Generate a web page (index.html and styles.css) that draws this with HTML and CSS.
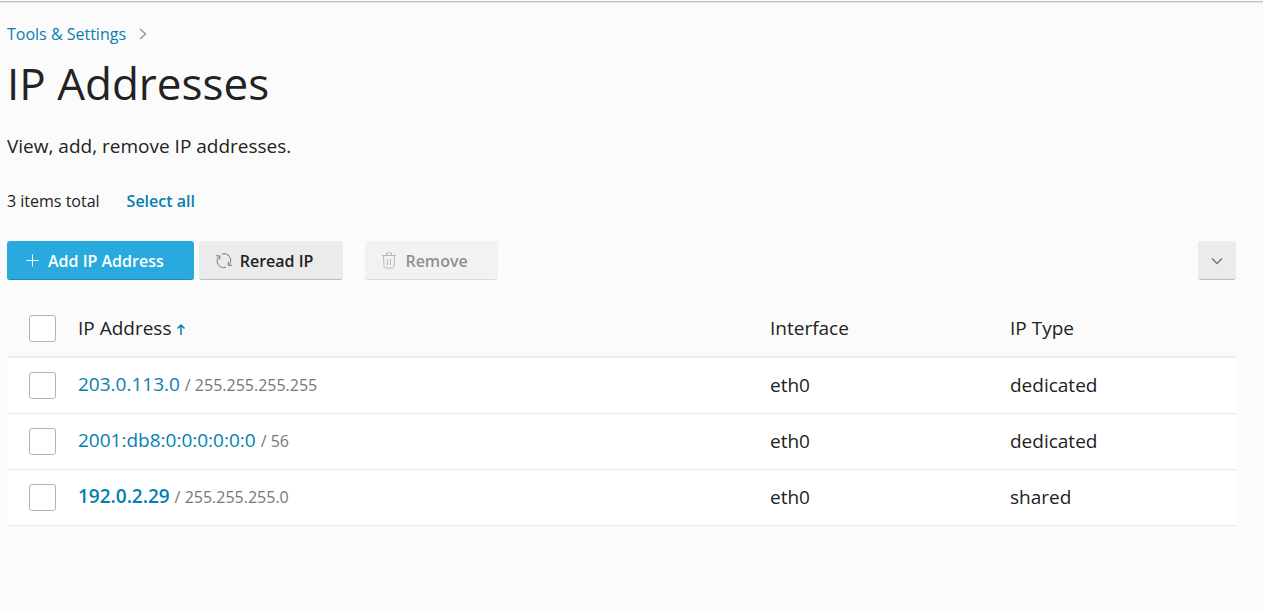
FILE: index.html
```html
<!DOCTYPE html>
<html lang="en">
<head>
<meta charset="utf-8">
<meta name="viewport" content="width=device-width, initial-scale=1">
<title>IP Addresses</title>
<link rel="stylesheet" href="styles.css">
</head>
<body>
<main class="page">
  <nav class="breadcrumb" aria-label="Breadcrumb">
    <a class="link" href="#">Tools &amp; Settings</a>
    <svg class="breadcrumb-icon" width="8" height="12" viewBox="0 0 8 12" aria-hidden="true"><path d="M1 1l5.500 5L1 11"/></svg>
  </nav>
  <h1 class="title">IP Addresses</h1>
  <p class="description">View, add, remove IP addresses.</p>
  <div class="summary">
    <span>3 items total</span>
    <a class="link strong" href="#">Select all</a>
  </div>
  <div class="toolbar">
    <button class="button primary" type="button">
      <svg class="icon" width="16" height="16" viewBox="0 0 16 16" aria-hidden="true"><path d="M8.500 1.500v12M2.500 7.500h12"/></svg>
      <span>Add IP Address</span>
    </button>
    <button class="button" type="button">
      <svg class="icon" width="18" height="18" viewBox="0 0 18 18" aria-hidden="true"><path d="M1 3.800h3.700v3.700M4.300 4.300A6.500 6.500 0 0 0 10.800 15.200M6.700 2.200A6.600 6.600 0 0 1 13.700 13M13.300 9.800v3.500H17"/></svg>
      <span>Reread IP</span>
    </button>
    <button class="button remove" type="button" disabled>
      <svg class="icon" width="16" height="18" viewBox="0 0 16 18" aria-hidden="true"><path d="M1 3.500h14M5.500 3.500v-2.500h5v2.500M2.500 3.500l.5 11q0 1.500 1.500 1.500h7q1.500 0 1.500-1.500l.5-11M6.500 7v6M9.500 7v6"/></svg>
      <span>Remove</span>
    </button>
    <button class="button toggle" type="button" aria-label="Show filters">
      <svg class="icon" width="12" height="8" viewBox="0 0 12 8" aria-hidden="true"><path d="M1 1.500l5 5 5-5"/></svg>
    </button>
  </div>
  <table class="list">
    <thead>
      <tr>
        <th class="col-check"><input class="checkbox" type="checkbox" aria-label="Select all addresses"></th>
        <th class="col-address">IP Address <svg class="sort" width="10" height="12" viewBox="0 0 10 12" aria-hidden="true"><path d="M5 12V2M1.500 5.500L5 2l3.500 3.500"/></svg></th>
        <th class="col-interface">Interface</th>
        <th class="col-type">IP Type</th>
      </tr>
    </thead>
    <tbody>
      <tr>
        <td class="col-check"><input class="checkbox" type="checkbox" aria-label="Select 203.0.113.0"></td>
        <td><a class="link" href="#">203.0.113.0</a> <span class="mask">/ 255.255.255.255</span></td>
        <td>eth0</td>
        <td>dedicated</td>
      </tr>
      <tr>
        <td class="col-check"><input class="checkbox" type="checkbox" aria-label="Select 2001:db8:0:0:0:0:0:0"></td>
        <td><a class="link" href="#">2001:db8:0:0:0:0:0:0</a> <span class="mask">/ 56</span></td>
        <td>eth0</td>
        <td>dedicated</td>
      </tr>
      <tr>
        <td class="col-check"><input class="checkbox" type="checkbox" aria-label="Select 192.0.2.29"></td>
        <td><a class="link strong" href="#">192.0.2.29</a> <span class="mask">/ 255.255.255.0</span></td>
        <td>eth0</td>
        <td>shared</td>
      </tr>
    </tbody>
  </table>
</main>
</body>
</html>
```
FILE: styles.css
```css
* {
  box-sizing: border-box;
}

body {
  margin: 0;
  background: #fbfbfb;
  color: #222;
  font: 16px/24px "Open Sans", sans-serif;
}

.page {
  margin-top: 1px;
  padding: 20px 27px 24px 7px;
  border-top: 1px solid #c4c5c4;
  box-shadow: inset 0 1px #e4e4e4;
}

.link {
  color: #0580b0;
  text-decoration: none;
}

.link:hover {
  text-decoration: underline;
}

.strong {
  font-weight: 600;
}

svg {
  fill: none;
  stroke: currentColor;
}

.breadcrumb {
  display: flex;
  align-items: center;
  gap: 13px;
}

.breadcrumb-icon {
  color: #999;
  stroke-width: 1.500;
}

.title {
  margin: 7px 0 0;
  font-size: 44px;
  font-weight: 400;
  line-height: 60px;
}

.description {
  margin: 19px 0 0;
  font-size: 19px;
  line-height: 28px;
}

.summary {
  display: flex;
  gap: 27px;
  margin-top: 29px;
}

.toolbar {
  display: flex;
  gap: 5px;
  margin-top: 28px;
}

.button {
  display: flex;
  align-items: center;
  gap: 7px;
  height: 39px;
  padding: 2px 30px 0 16px;
  border: 0;
  border-bottom: 1px solid #bcbcbc;
  border-radius: 3px;
  background: #ebebeb;
  color: #222;
  font: 600 16px/24px "Open Sans", sans-serif;
}

.button .icon {
  color: #777;
}

.primary {
  gap: 8px;
  padding-left: 17px;
  border-color: #2089b5;
  background: #28aade;
  color: #fff;
}

.primary .icon {
  color: #fff;
}

.remove {
  gap: 8px;
  margin-left: 17px;
  opacity: 0.5;
}

.toggle {
  justify-content: center;
  width: 38px;
  margin-left: auto;
  padding: 2px 0 0;
}

.toggle .icon {
  stroke-width: 1.500;
}

.list {
  width: 100%;
  margin-top: 20px;
  border-collapse: separate;
  border-spacing: 0;
  table-layout: fixed;
  font-size: 19px;
}

.list th {
  height: 58px;
  padding: 0 10px;
  border-bottom: 2px solid #ebebeb;
  font-weight: 400;
  text-align: left;
}

.list td {
  height: 56px;
  padding: 0 10px 2px;
  border-bottom: 1px solid #ebebeb;
  background: #fff;
}

.list .col-check {
  width: 61px;
  padding: 0 0 0 22px;
}

.col-interface {
  width: 240px;
}

.col-type {
  width: 236px;
}

.checkbox {
  display: block;
  width: 27px;
  height: 27px;
  margin: 0;
  border: 1px solid #b3b3b3;
  border-radius: 3px;
  background: #fff;
  appearance: none;
}

.checkbox:checked {
  border-color: #28aade;
  background: #28aade;
}

.sort {
  color: #0580b0;
  stroke-width: 1.500;
}

.mask {
  color: #777;
  font-size: 16px;
}
```
